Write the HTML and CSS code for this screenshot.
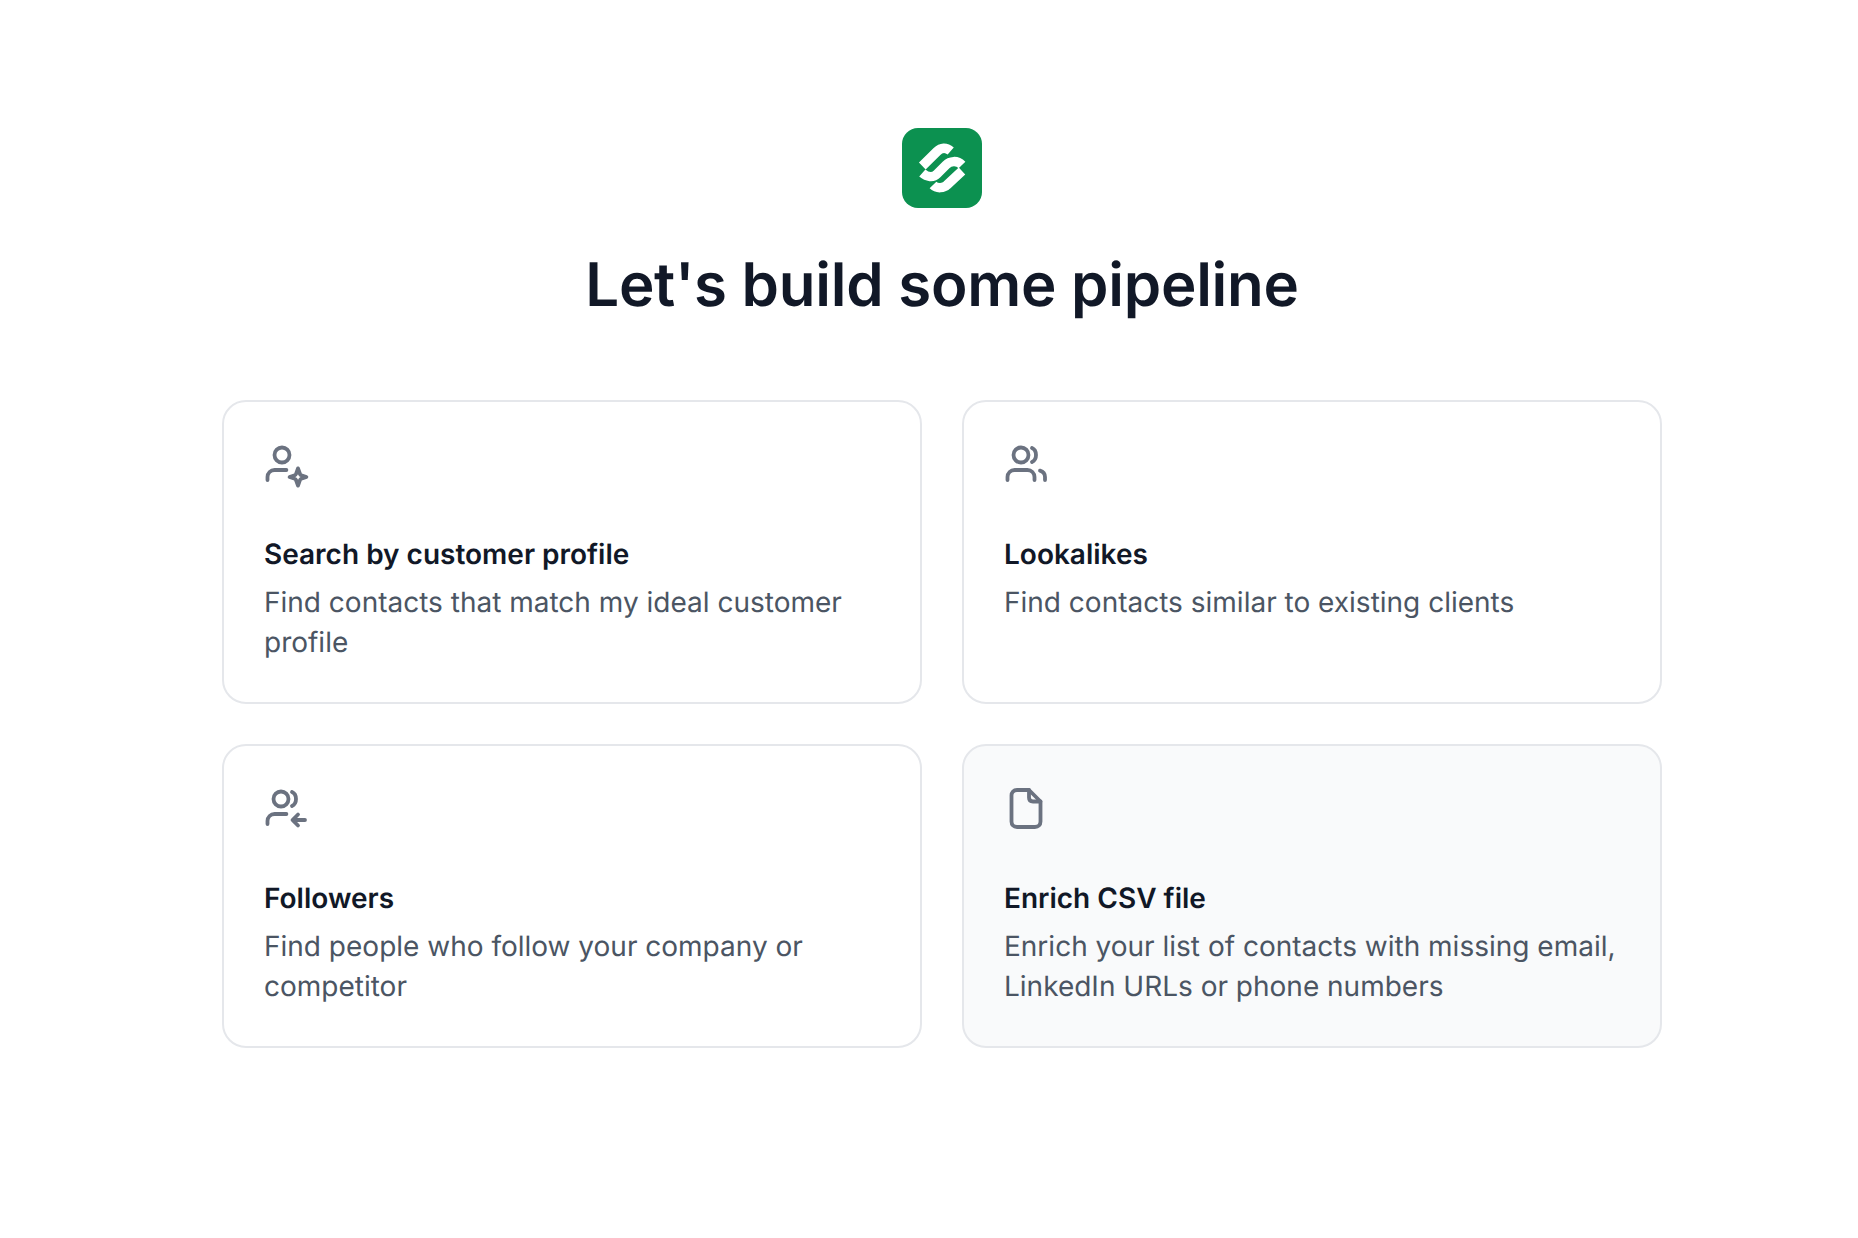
FILE: index.html
```html
<!DOCTYPE html>
<html lang="en">

<head>
    <meta charset="UTF-8">
    <title>Let's build some pipeline</title>
    <link rel="stylesheet" href="styles.css">
</head>

<body>
    <div class="container">
        <div class="logo">
            <svg viewBox="0 0 80 80" width="80" height="80" fill="none" stroke="#fff" stroke-width="9.5">
                <path d="M20.3 38L35 23.5C39 19.5 44 19 48.7 23" />
                <path d="M20.3 45C25 49 31 50 35 46L44 37C48 33 55 32 60 37" />
                <path d="M31 57C35 61 42 60 45 57L60 43" />
            </svg>
        </div>
        <h1>Let's build some pipeline</h1>
        <div class="cards">
            <div class="card">
                <svg class="icon" viewBox="0 0 24 24" fill="none" stroke="currentColor" stroke-width="1.9" stroke-linecap="round" stroke-linejoin="round">
                    <circle cx="9" cy="6.5" r="3.75" />
                    <path d="M1.75 19V17.5C1.75 15.5 3.3 14 5.3 14H11.2" />
                    <path d="M17 13.2L18 16C18.1 16.3 18.3 16.5 18.6 16.6L21.2 17.5L18.6 18.4C18.3 18.5 18.1 18.7 18 19L17 21.8L16 19C15.9 18.7 15.7 18.5 15.4 18.4L12.8 17.5L15.4 16.6C15.7 16.5 15.9 16.3 16 16Z" />
                </svg>
                <h2>Search by customer profile</h2>
                <p>Find contacts that match my ideal customer profile</p>
            </div>
            <div class="card">
                <svg class="icon" viewBox="0 0 24 24" fill="none" stroke="currentColor" stroke-width="1.9" stroke-linecap="round" stroke-linejoin="round">
                    <circle cx="8.5" cy="6.5" r="3.75" />
                    <path d="M1.75 19V17.5C1.75 15.5 3.3 14 5.3 14H11.7C13.7 14 15.25 15.5 15.25 17.5V19" />
                    <path d="M14 3C15.3 3.6 16 4.9 16 6.5C16 8.1 15.3 9.4 14 10" />
                    <path d="M18 14.3C19.6 14.8 20.5 16 20.5 17.5V19" />
                </svg>
                <h2>Lookalikes</h2>
                <p>Find contacts similar to existing clients</p>
            </div>
            <div class="card">
                <svg class="icon" viewBox="0 0 24 24" fill="none" stroke="currentColor" stroke-width="1.9" stroke-linecap="round" stroke-linejoin="round">
                    <circle cx="8.5" cy="6.5" r="3.75" />
                    <path d="M1.75 19V17.5C1.75 15.5 3.3 14 5.3 14H11.2" />
                    <path d="M14 3C15.3 3.6 16 4.9 16 6.5C16 8.1 15.3 9.4 14 10" />
                    <path d="M20.5 17H14.5M17 14.25L14.25 17L17 19.75" />
                </svg>
                <h2>Followers</h2>
                <p>Find people who follow your company or competitor</p>
            </div>
            <div class="card card-muted">
                <svg class="icon" viewBox="0 0 24 24" fill="none" stroke="currentColor" stroke-width="1.9" stroke-linecap="round" stroke-linejoin="round">
                    <path d="M12.5 2H6.5C4.8 2 3.75 3.05 3.75 4.75V17.75C3.75 19.45 4.8 20.5 6.5 20.5H15.5C17.2 20.5 18.25 19.45 18.25 17.75V7.75L12.5 2Z" />
                    <path d="M12.5 2V5.75C12.5 6.85 13.15 7.75 14.5 7.75H18.25" />
                </svg>
                <h2>Enrich CSV file</h2>
                <p>Enrich your list of contacts with missing email, LinkedIn URLs or phone numbers</p>
            </div>
        </div>
    </div>
</body>

</html>
```

FILE: styles.css
```css
body {
    font-family: Inter, "Liberation Sans", Arial, sans-serif;
    text-rendering: geometricPrecision;
    margin: 0;
    background-color: #fff;
    color: #111827;
}

.container {
    display: flex;
    flex-direction: column;
    align-items: center;
    padding: 128px 196px 0 222px;
}

.logo {
    width: 80px;
    height: 80px;
    border-radius: 16px;
    background-color: #0c9150;
}

.logo svg {
    display: block;
}

h1 {
    margin: 41px 0 79px;
    font-size: 60px;
    line-height: 72px;
    font-weight: 600;
    letter-spacing: -0.25px;
}

.cards {
    display: grid;
    grid-template-columns: 700px 700px;
    gap: 40px;
}

.card {
    height: 304px;
    box-sizing: border-box;
    padding: 40px;
    border: 2px solid #e5e7eb;
    border-radius: 24px;
}

.card-muted {
    background-color: #f9fafb;
}

.icon {
    display: block;
    width: 48px;
    height: 48px;
    margin-bottom: 44px;
    color: #6b7280;
}

h2 {
    margin: 0 0 8px;
    font-size: 28px;
    line-height: 40px;
    font-weight: 600;
}

p {
    margin: 0;
    font-size: 28px;
    line-height: 40px;
    color: #4b5563;
}
```
